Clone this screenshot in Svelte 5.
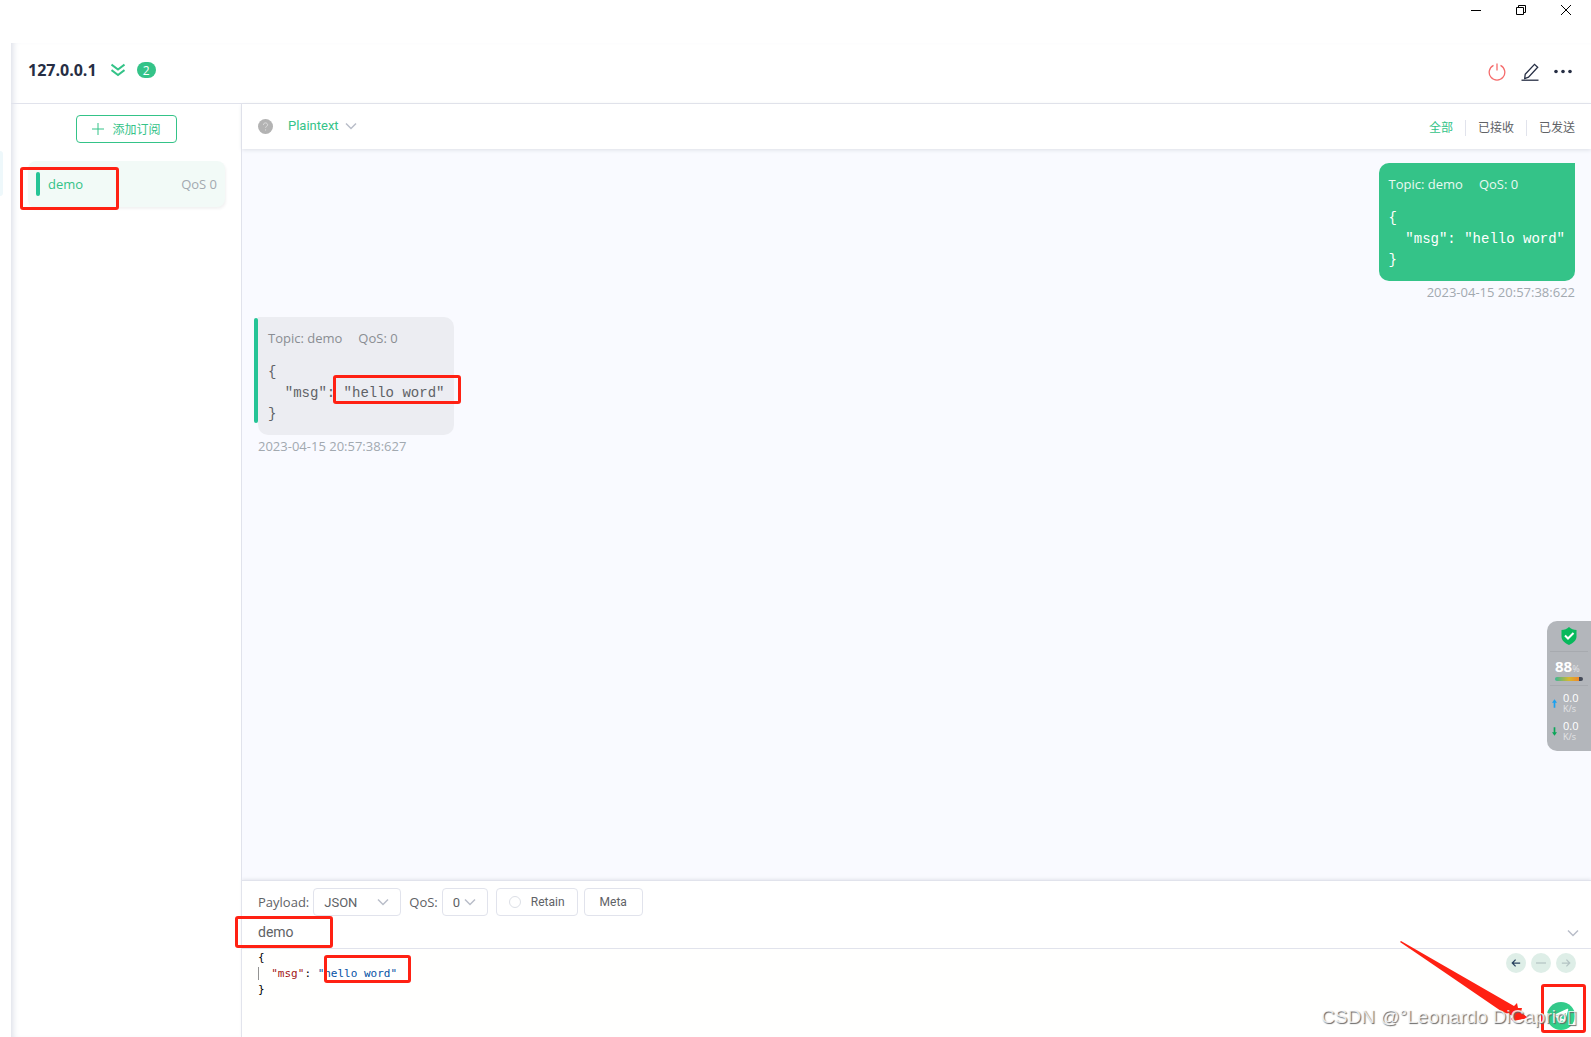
<script lang="ts">
	type Message = { id: number; out: boolean; topic: string; qos: number; msg: string; time: string };

	const messages: Message[] = [
		{ id: 1, out: true, topic: 'demo', qos: 0, msg: 'hello word', time: '2023-04-15 20:57:38:622' },
		{ id: 2, out: false, topic: 'demo', qos: 0, msg: 'hello word', time: '2023-04-15 20:57:38:627' }
	];

	const filters = ['全部', '已接收', '已发送'];

	let activeFilter = $state('全部');
	let payloadType = $state('JSON');
	let decoder = $state('Plaintext');
	let qos = $state('0');
	let topic = $state('demo');

	const visible = $derived(
		messages.filter((m) => activeFilter === '全部' || m.out === (activeFilter === '已发送'))
	);
</script>

{#snippet chevron()}
	<svg class="chevron" viewBox="0 0 12 12" aria-hidden="true"><path d="M1 3.5 6 8.5 11 3.5" /></svg>
{/snippet}

<div class="app">
	<div class="titlebar">
		<button aria-label="Minimize">
			<svg viewBox="0 0 12 12"><path d="M1 6.5h10" /></svg>
		</button>
		<button aria-label="Restore">
			<svg viewBox="0 0 12 12"><path d="M1.5 3.5h7v7h-7zM3.5 3.5v-2h7v7h-2" /></svg>
		</button>
		<button aria-label="Close">
			<svg viewBox="0 0 12 12"><path d="m1 1 10 10M11 1 1 11" /></svg>
		</button>
	</div>

	<div class="rail"><span class="rail-item"></span></div>

	<main class="panel">
		<header class="head">
			<h1>127.0.0.1</h1>
			<button class="expand" aria-label="Expand connection">
				<svg viewBox="0 0 14 14"><path d="m.5 1.500 6.500 5 6.500-5M.5 7l6.500 5 6.500-5" /></svg>
			</button>
			<span class="count">2</span>
			<div class="head-actions">
				<button class="power" aria-label="Disconnect">
					<svg viewBox="0 0 18 18"><path d="M5.5 2.3a7.8 7.8 0 1 0 7 0M9 .5v7" /></svg>
				</button>
				<button aria-label="Edit">
					<svg viewBox="0 0 18 18">
						<path d="M.5 17.2h17" />
						<path d="m4.2 11.2 9.3-9.9 3.2 3-9.2 9.8-3.8 1.4z" />
					</svg>
				</button>
				<button aria-label="More">
					<svg class="dots" viewBox="0 0 18 18">
						<circle cx="2" cy="8.500" r="1.8" /><circle cx="9" cy="8.500" r="1.8" /><circle cx="16" cy="8.500" r="1.8" />
					</svg>
				</button>
			</div>
		</header>

		<aside class="subs">
			<button class="add">
				<svg viewBox="0 0 12 12"><path d="M6 0v12M0 6h12" /></svg>
				添加订阅
			</button>
			<div class="sub">
				<span class="sub-bar"></span>
				<span class="sub-topic">demo</span>
				<span class="sub-qos">QoS 0</span>
				<span class="mark mark-sub"></span>
			</div>
		</aside>

		<section class="chat">
			<div class="toolbar">
				<svg class="help" viewBox="0 0 16 16" aria-hidden="true">
					<circle cx="8" cy="8" r="8" />
					<path d="M5.8 6.3c0-3 4.5-2.7 4.5 0 0 1.4-2.2 1.5-2.2 3M8.1 11v1.3" />
				</svg>
				<label class="decoder">
					<select bind:value={decoder} aria-label="Payload decoder">
						<option>Plaintext</option>
						<option>JSON</option>
						<option>Hex</option>
					</select>
					{@render chevron()}
				</label>
				<nav class="filters">
					{#each filters as f (f)}
						<button class:active={f === activeFilter} onclick={() => (activeFilter = f)}>{f}</button>
					{/each}
				</nav>
			</div>

			<div class="messages">
				{#each visible as m (m.id)}
					<article class="message" class:out={m.out}>
						<div class="card">
							<p class="meta"><span>Topic: {m.topic}</span><span>QoS: {m.qos}</span></p>
							<pre>{`{\n  "msg": "${m.msg}"\n}`}</pre>
							{#if !m.out}<span class="mark mark-msg"></span>{/if}
						</div>
						<time>{m.time}</time>
					</article>
				{/each}
			</div>

			<footer class="composer">
				<div class="options">
					<label for="payload">Payload:</label>
					<span class="select payload">
						<select id="payload" bind:value={payloadType}>
							<option>JSON</option>
							<option>Plaintext</option>
							<option>Hex</option>
						</select>
						{@render chevron()}
					</span>
					<label for="qos">QoS:</label>
					<span class="select qos">
						<select id="qos" bind:value={qos}>
							<option>0</option>
							<option>1</option>
							<option>2</option>
						</select>
						{@render chevron()}
					</span>
					<label class="retain"><input type="radio" name="retain" />Retain</label>
					<button class="meta-btn">Meta</button>
				</div>
				<div class="topic-row">
					<input type="text" aria-label="Topic" bind:value={topic} />
					<button aria-label="Collapse">{@render chevron()}</button>
					<span class="mark mark-topic"></span>
				</div>
				<div class="editor">
					<pre><span>{'{'}</span>
<span class="line"><span class="guide">  </span><span class="key">"msg"</span>: <span class="value">"hello word"</span></span>
<span>{'}'}</span></pre>
					<span class="mark mark-value"></span>
					<div class="history">
						<button aria-label="Previous" class="on">
							<svg viewBox="0 0 12 12"><path d="M11 6H2M5.5 2 1.5 6l4 4" /></svg>
						</button>
						<button aria-label="Clear">
							<svg viewBox="0 0 12 12"><path d="M0 6h12" /></svg>
						</button>
						<button aria-label="Next">
							<svg viewBox="0 0 12 12"><path d="M1 6h9M6.5 2l4 4-4 4" /></svg>
						</button>
					</div>
					<button class="send" aria-label="Send">
						<svg viewBox="0 0 16 16"><path d="M14.5 1.5 1.5 7.5l3.5 2zM14.5 1.5 6.5 10.5l5 2zM6.5 10.5v4l2-3" /></svg>
					</button>
					<span class="mark mark-send"></span>
					<svg class="arrow" viewBox="0 0 130 80" aria-hidden="true">
						<path d="M1 0 114 65 117 62 118 67 122 67 121 71 128 77 113 80 111 78 113 75 101 70Q50 35 0 1Z" />
					</svg>
				</div>
			</footer>
		</section>
	</main>

	<aside class="monitor">
		<svg class="shield" viewBox="0 0 16 18">
			<path class="shield-bg" d="M8 0Q11 3 15.500 3v6.5c0 4-3.5 6.5-7.5 8.5C4 16 .5 13.500.5 9.500V3Q5 3 8 0z" />
			<path class="shield-tick" d="m4 8.5 3 3 5.5-5.5" />
		</svg>
		<div class="usage">
			<p><b>88</b><small>%</small></p>
			<span class="usage-bar"></span>
		</div>
		<div class="rates">
			<div class="rate up">
				<svg viewBox="0 0 6 10"><path d="M3 0 6 4H4v6H2V4H0z" /></svg>
				<p>0.0<small>K/s</small></p>
			</div>
			<div class="rate">
				<svg viewBox="0 0 6 10"><path d="M3 10 0 6h2V0h2v6h2z" /></svg>
				<p>0.0<small>K/s</small></p>
			</div>
		</div>
	</aside>

	<span class="watermark">CSDN @°Leonardo DiCaprio▯</span>
</div>

<style>
	:global(body) {
		background: #fff;
	}

	.app {
		--green: #34c388;
		--border: #e1e3ec;
		position: relative;
		display: grid;
		grid-template-columns: 11px 1fr;
		grid-template-rows: 43px 1fr;
		min-height: 100vh;
		overflow: hidden;
		font-family: 'Open Sans', 'Noto Sans CJK SC', sans-serif;
		font-size: 13px;
		color: #606266;
	}

	.app * {
		box-sizing: border-box;
	}

	p,
	pre,
	h1 {
		margin: 0;
	}

	button,
	select,
	input {
		margin: 0;
		padding: 0;
		border: 0;
		background: none;
		font: inherit;
		color: inherit;
	}

	button {
		cursor: pointer;
	}

	svg {
		display: block;
		fill: none;
		stroke: currentColor;
	}

	.titlebar {
		grid-column: 1 / -1;
		display: flex;
		justify-content: flex-end;
		align-items: flex-start;
		gap: 33px;
		padding: 4px 19px 0 0;
		color: #000;
	}

	.titlebar svg {
		width: 12px;
		height: 12px;
	}

	.rail-item {
		display: block;
		width: 3px;
		height: 45px;
		margin-top: 108px;
		border-radius: 0 6px 6px 0;
		background: #eef8fb;
	}

	.panel {
		display: grid;
		grid-template-columns: 231px 1fr;
		grid-template-rows: 61px 1fr;
		box-shadow: inset 6px 0 6px -4px #dcdfe8;
	}

	.head {
		grid-column: 1 / -1;
		display: flex;
		align-items: center;
		padding: 0 19px 6px 17px;
		border-bottom: 1px solid var(--border);
	}

	.head h1 {
		font-size: 16px;
		line-height: 20px;
		font-weight: 700;
		color: #262e44;
	}

	.expand {
		margin: 0 12px 0 14px;
		color: var(--green);
	}

	.expand svg {
		width: 14px;
		height: 14px;
		stroke-width: 2;
	}

	.count {
		width: 19px;
		height: 16px;
		border-radius: 8px;
		background: var(--green);
		color: #fff;
		font-size: 12px;
		line-height: 18px;
		text-align: center;
	}

	.head-actions {
		display: flex;
		align-items: center;
		gap: 15px;
		margin-left: auto;
		padding-top: 4px;
		color: #262e44;
	}

	.head-actions svg {
		width: 18px;
		height: 18px;
		stroke-width: 1.3;
	}

	.power {
		color: #f56c6c;
	}

	.head-actions .dots {
		fill: currentColor;
		stroke: none;
	}

	.subs {
		padding: 11px 16px 0 17px;
		border-right: 1px solid var(--border);
	}

	.add {
		display: flex;
		align-items: center;
		justify-content: center;
		gap: 8px;
		width: 101px;
		height: 28px;
		margin: 0 auto 18px 48px;
		padding-bottom: 1px;
		border: 1px solid var(--green);
		border-radius: 4px;
		color: var(--green);
		font-size: 12px;
	}

	.add svg {
		width: 12px;
		height: 12px;
	}

	.sub {
		position: relative;
		display: flex;
		align-items: flex-start;
		height: 46px;
		padding: 11px 8px 0 8px;
		border-radius: 8px;
		background: #f2faf7;
		box-shadow: 1px 2px 3px #f2f2f2;
		line-height: 24px;
	}

	.sub-bar {
		width: 4px;
		height: 24px;
		margin-right: 8px;
		border-radius: 2px;
		background: #25c496;
	}

	.sub-topic {
		color: var(--green);
	}

	.sub-qos {
		margin-left: auto;
		color: #a2a9b0;
	}

	.mark {
		position: absolute;
		border: 3px solid #ff2113;
		border-radius: 3px;
		pointer-events: none;
	}

	.mark-sub {
		left: -8px;
		top: 6px;
		width: 99px;
		height: 43px;
	}

	.chat {
		display: flex;
		flex-direction: column;
		min-width: 0;
	}

	.toolbar {
		position: relative;
		display: flex;
		align-items: center;
		height: 45px;
		padding: 0 16px;
		background: #fff;
		box-shadow: 0 1px 4px #dcdfe6;
	}

	.help {
		width: 15px;
		height: 15px;
		margin-right: 15px;
		fill: #b3b3b3;
		stroke: none;
	}

	.help path {
		fill: none;
		stroke: #ddd;
	}

	.decoder {
		display: flex;
		align-items: center;
		gap: 6px;
		padding-bottom: 2px;
		color: var(--green);
		font-family: Roboto, sans-serif;
	}

	select {
		appearance: none;
		outline: 0;
	}

	.chevron {
		width: 12px;
		height: 12px;
		color: #b9bec9;
		stroke-width: 1.5;
		pointer-events: none;
	}

	.filters {
		display: flex;
		margin-left: auto;
		padding-top: 2px;
		font-size: 12px;
		line-height: 16px;
	}

	.filters button + button {
		margin-left: 12px;
		padding-left: 12px;
		border-left: 1px solid var(--border);
	}

	.filters .active {
		color: var(--green);
	}

	.messages {
		flex: 1;
		padding: 14px 16px;
		background: #f9faff;
	}

	.message {
		display: flex;
		flex-direction: column;
		align-items: flex-start;
		margin-bottom: 14px;
	}

	.message.out {
		align-items: flex-end;
	}

	.card {
		position: relative;
		padding: 10px;
		border-radius: 0 10px 10px 10px;
		background: #ecedf2;
	}

	.card::before {
		content: '';
		position: absolute;
		left: -4px;
		top: 1px;
		width: 4px;
		height: 105px;
		border-radius: 2px;
		background: #25c496;
	}

	.out .card {
		border-radius: 10px 0 10px 10px;
		background: var(--green);
		color: #fff;
	}

	.out .card::before {
		display: none;
	}

	.meta {
		display: flex;
		gap: 16px;
		margin-bottom: 13px;
		line-height: 22px;
		color: #8a8d93;
	}

	.out .meta {
		color: #e9f9f2;
	}

	.card pre {
		font-family: 'Liberation Mono', monospace;
		font-size: 14px;
		line-height: 21px;
	}

	.mark-msg {
		right: -7px;
		bottom: 31px;
		width: 128px;
		height: 29px;
	}

	time {
		line-height: 22px;
		color: #a2a9b0;
	}

	.composer {
		position: relative;
		border-top: 1px solid var(--border);
		box-shadow: 0 -1px 3px #e4e6ed;
		background: #fff;
	}

	.options {
		display: flex;
		align-items: center;
		height: 36px;
		padding: 6px 16px 0;
	}

	.select {
		position: relative;
		display: flex;
		align-items: center;
		height: 28px;
		margin: 0 8px 0 4px;
		border: 1px solid var(--border);
		border-radius: 4px;
		font-family: Roboto, sans-serif;
		font-size: 13px;
	}

	.select select {
		width: 100%;
		height: 100%;
		padding-left: 10px;
	}

	.select .chevron {
		position: absolute;
		right: 11px;
	}

	.payload {
		width: 88px;
	}

	.qos {
		width: 46px;
	}

	.retain,
	.meta-btn {
		display: flex;
		align-items: center;
		justify-content: center;
		gap: 10px;
		height: 28px;
		border: 1px solid var(--border);
		border-radius: 4px;
		font-family: Roboto, sans-serif;
		font-size: 12px;
	}

	.retain {
		width: 82px;
		margin-right: 6px;
	}

	.retain input {
		appearance: none;
		width: 12px;
		height: 12px;
		border: 1px solid #dcdfe6;
		border-radius: 50%;
	}

	.meta-btn {
		width: 59px;
	}

	.topic-row {
		position: relative;
		display: flex;
		align-items: center;
		height: 32px;
		padding: 0 12px 0 16px;
		border-bottom: 1px solid var(--border);
	}

	.topic-row input {
		flex: 1;
		min-width: 0;
		padding-bottom: 2px;
		outline: 0;
		font-family: Roboto, sans-serif;
		font-size: 14px;
	}

	.mark-topic {
		left: -7px;
		top: -1px;
		width: 98px;
		height: 32px;
	}

	.editor {
		position: relative;
		display: flex;
		justify-content: space-between;
		height: 88px;
		padding: 0 15px 0 16px;
		background: #fffffe;
	}

	.editor pre {
		padding-top: 1px;
		font-family: 'DejaVu Sans Mono', monospace;
		font-size: 11px;
		line-height: 16px;
		color: #000;
	}

	.line {
		display: inline-block;
	}

	.guide {
		box-shadow: inset 1px 0 #939393;
	}

	.key {
		color: #a31515;
	}

	.value {
		color: #0451a5;
	}

	.mark-value {
		left: 82px;
		top: 6px;
		width: 87px;
		height: 28px;
	}

	.history {
		display: flex;
		gap: 5px;
		margin-top: 4px;
	}

	.history button {
		display: grid;
		place-items: center;
		width: 20px;
		height: 20px;
		border-radius: 50%;
		background: #deeee7;
		color: #b4c4c4;
	}

	.history .on {
		color: #2a4360;
	}

	.history svg {
		width: 10px;
		height: 10px;
		stroke-width: 1.5;
	}

	.send {
		position: absolute;
		right: 16px;
		bottom: 7px;
		display: grid;
		place-items: center;
		width: 28px;
		height: 28px;
		border-radius: 50%;
		background: linear-gradient(135deg, #34c388, #31d98c);
		color: #fff;
	}

	.send svg {
		width: 16px;
		height: 16px;
		stroke-width: 1.5;
		stroke-linejoin: round;
	}

	.mark-send {
		right: 5px;
		bottom: 4px;
		width: 45px;
		height: 49px;
	}

	.arrow {
		position: absolute;
		right: 61px;
		bottom: 16px;
		width: 130px;
		height: 80px;
		fill: #ff2113;
		stroke: none;
		pointer-events: none;
	}

	.monitor {
		position: absolute;
		right: 0;
		top: 621px;
		width: 44px;
		height: 130px;
		padding: 6px 3px 0 3px;
		border-radius: 10px 0 0 10px;
		background: #b3b6bb;
		color: #fff;
	}

	.shield {
		width: 16px;
		height: 18px;
		margin: 0 auto 6px;
		stroke: none;
	}

	.shield-bg {
		fill: #07b95c;
	}

	.shield-tick {
		stroke: #fff;
		stroke-width: 2;
	}

	.usage {
		height: 35px;
		padding: 6px 0 0 5px;
		border-top: 1px solid #a7aaaf;
		border-bottom: 1px solid #a7aaaf;
	}

	.usage p {
		font-size: 15px;
		line-height: 16px;
		white-space: nowrap;
	}

	small {
		font-size: 9px;
		color: #e3e4e6;
	}

	.usage-bar {
		display: block;
		width: 28px;
		height: 4px;
		border-radius: 2px;
		background: linear-gradient(90deg, #3ab795, #d5b830 50%, #ef8a2c 84%, #444a58 85%);
	}

	.rates {
		padding-top: 3px;
	}

	.rate {
		display: flex;
		align-items: center;
		gap: 6px;
		height: 28px;
		padding-left: 2px;
		font-size: 11px;
		line-height: 12px;
		color: #fff;
	}

	.rate svg {
		width: 5px;
		height: 9px;
		fill: #0aa658;
		stroke: none;
	}

	.rate.up svg {
		fill: #1ba1f0;
	}

	.rate small {
		display: block;
		line-height: 10px;
	}

	.watermark {
		position: absolute;
		right: 14px;
		bottom: 9px;
		font-family: 'Liberation Sans', 'DejaVu Sans', sans-serif;
		font-size: 19px;
		line-height: 22px;
		color: rgba(255, 255, 255, 0.8);
		text-shadow: 1px 1px 1px #666;
		pointer-events: none;
	}
</style>
